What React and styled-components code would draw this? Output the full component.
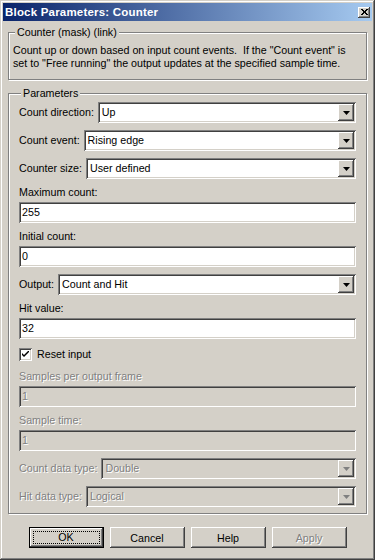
import React from "react";
import styled, { createGlobalStyle, css } from "styled-components";

const Global = createGlobalStyle`
  html, body { margin: 0; padding: 0; background: #d4d0c8; }
  body { font-family: "Liberation Sans", Arial, sans-serif; font-size: 10.7px; color: #000; }
  * { box-sizing: border-box; }
`;

const raised = css`
  box-shadow: inset -1px -1px 0 #404040, inset 1px 1px 0 #ffffff,
    inset -2px -2px 0 #808080, inset 2px 2px 0 #d4d0c8;
`;
const sunken = css`
  box-shadow: inset 1px 1px 0 #808080, inset -1px -1px 0 #ffffff,
    inset 2px 2px 0 #404040, inset -2px -2px 0 #d4d0c8;
`;
const disabledText = css`
  color: #808080;
  text-shadow: 1px 1px 0 #ffffff;
`;

const Window = styled.div`
  width: 375px;
  height: 560px;
  background: #d4d0c8;
  padding: 3px;
  display: flex;
  flex-direction: column;
  box-shadow: inset -1px -1px 0 #404040, inset 1px 1px 0 #d4d0c8,
    inset -2px -2px 0 #808080, inset 2px 2px 0 #ffffff;
`;

const TitleBar = styled.div`
  height: 18px;
  background: linear-gradient(to right, #0a246a, #a6caf0);
  color: #fff;
  font-weight: bold;
  font-size: 11.5px;
  letter-spacing: 0.2px;
  display: flex;
  align-items: center;
  justify-content: space-between;
  padding: 0 2px 0 2px;
`;

const CloseBtn = styled.div`
  width: 12px;
  height: 11px;
  background: #d4d0c8;
  ${raised};
  display: flex;
  align-items: center;
  justify-content: center;
`;

const Body = styled.div`
  display: flex;
  flex-direction: column;
  padding: 5px 5px 0 5px;
  flex: 1;
`;

const Group = styled.fieldset`
  margin: ${(p) => p.$mt || 0}px 0 0 0;
  padding: ${(p) => p.$pad};
  border: 1px solid #808080;
  box-shadow: 1px 1px 0 #ffffff, inset 1px 1px 0 #ffffff;
  min-inline-size: 0;
  display: flex;
  flex-direction: column;
`;

const Legend = styled.legend`
  padding: 0 2px;
  margin-left: 2px;
  line-height: 13px;
  background: #d4d0c8;
`;

const Desc = styled.div`
  line-height: 13px;
  white-space: nowrap;
`;

const Params = styled.div`
  display: flex;
  flex-direction: column;
  gap: 7px;
`;

const Row = styled.div`
  display: flex;
  align-items: center;
  gap: 4px;
`;

const Label = styled.div`
  line-height: 13px;
  white-space: nowrap;
  ${(p) => p.$disabled && disabledText};
`;

const Field = styled.div`
  display: flex;
  flex-direction: column;
  gap: 3px;
`;

const TextBox = styled.div`
  height: 21px;
  padding: 2px 3px;
  line-height: 17px;
  background: ${(p) => (p.$disabled ? "#d4d0c8" : "#ffffff")};
  ${sunken};
  ${(p) => p.$disabled && disabledText};
`;

const SelectBox = styled.div`
  flex: 1;
  height: 21px;
  padding: 2px;
  display: flex;
  background: ${(p) => (p.$disabled ? "#d4d0c8" : "#ffffff")};
  ${sunken};
`;

const SelectText = styled.div`
  flex: 1;
  padding-left: 2px;
  line-height: 17px;
  ${(p) => p.$disabled && disabledText};
`;

const ArrowBtn = styled.div`
  width: 16px;
  height: 17px;
  background: #d4d0c8;
  ${raised};
  display: flex;
  align-items: center;
  justify-content: center;
`;

const CheckRow = styled.div`
  display: flex;
  align-items: center;
  gap: 5px;
  height: 17px;
`;

const CheckBox = styled.div`
  width: 13px;
  height: 13px;
  background: #fff;
  ${sunken};
  display: flex;
  align-items: center;
  justify-content: center;
`;

const ButtonRow = styled.div`
  display: flex;
  justify-content: center;
  gap: 6px;
  margin-top: 13px;
`;

const Button = styled.div`
  width: 75px;
  height: 21px;
  background: #d4d0c8;
  display: flex;
  align-items: center;
  justify-content: center;
  ${raised};
  ${(p) => p.$disabled && disabledText};
  ${(p) =>
    p.$default &&
    css`
      border: 1px solid #000;
      box-shadow: inset -1px -1px 0 #404040, inset 1px 1px 0 #ffffff,
        inset -2px -2px 0 #808080;
    `};
`;

const Focus = styled.div`
  width: 67px;
  height: 13px;
  border: 1px dotted #000;
  display: flex;
  align-items: center;
  justify-content: center;
  line-height: 11px;
`;

const Arrow = ({ disabled }) => (
  <svg width="7" height="4" viewBox="0 0 7 4">
    <polygon points="0,0 7,0 3.5,4" fill={disabled ? "#808080" : "#000"} />
  </svg>
);

const Select = ({ value, disabled }) => (
  <SelectBox $disabled={disabled}>
    <SelectText $disabled={disabled}>{value}</SelectText>
    <ArrowBtn>
      <Arrow disabled={disabled} />
    </ArrowBtn>
  </SelectBox>
);

const SelectRow = ({ label, value, disabled }) => (
  <Row>
    <Label $disabled={disabled}>{label}</Label>
    <Select value={value} disabled={disabled} />
  </Row>
);

const TextField = ({ label, value, disabled }) => (
  <Field>
    <Label $disabled={disabled}>{label}</Label>
    <TextBox $disabled={disabled}>{value}</TextBox>
  </Field>
);

export default function App() {
  return (
    <>
      <Global />
      <Window>
        <TitleBar>
          <span>Block Parameters: Counter</span>
          <CloseBtn>
            <svg width="8" height="7" viewBox="0 0 8 7">
              <path d="M1 0 L7 6 M2 0 L8 6 M7 0 L1 6 M8 0 L2 6" stroke="#000" strokeWidth="1" fill="none" />
            </svg>
          </CloseBtn>
        </TitleBar>
        <Body>
          <Group $pad="5px 4px 9px 4px">
            <Legend>Counter (mask) (link)</Legend>
            <Desc>Count up or down based on input count events.&nbsp; If the "Count event" is</Desc>
            <Desc>set to "Free running" the output updates at the specified sample time.</Desc>
          </Group>
          <Group $mt={7} $pad="2px 10px 6px 10px">
            <Legend>Parameters</Legend>
            <Params>
              <SelectRow label="Count direction:" value="Up" />
              <SelectRow label="Count event:" value="Rising edge" />
              <SelectRow label="Counter size:" value="User defined" />
              <TextField label="Maximum count:" value="255" />
              <TextField label="Initial count:" value="0" />
              <SelectRow label="Output:" value="Count and Hit" />
              <TextField label="Hit value:" value="32" />
              <CheckRow>
                <CheckBox>
                  <svg width="7" height="7" viewBox="0 0 7 7">
                    <path d="M0 2 L0 4 L2 6 L7 1 L7 -1 L2 4 Z" fill="#000" />
                  </svg>
                </CheckBox>
                <Label>Reset input</Label>
              </CheckRow>
              <TextField label="Samples per output frame" value="1" disabled />
              <TextField label="Sample time:" value="1" disabled />
              <SelectRow label="Count data type:" value="Double" disabled />
              <SelectRow label="Hit data type:" value="Logical" disabled />
            </Params>
          </Group>
          <ButtonRow>
            <Button $default>
              <Focus>OK</Focus>
            </Button>
            <Button>Cancel</Button>
            <Button>Help</Button>
            <Button $disabled>Apply</Button>
          </ButtonRow>
        </Body>
      </Window>
    </>
  );
}
